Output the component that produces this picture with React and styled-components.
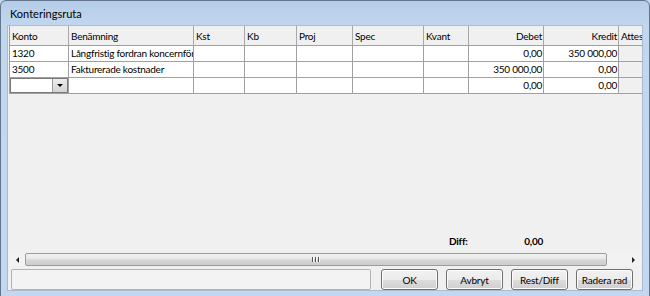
import React from "react";
import styled, { createGlobalStyle } from "styled-components";

const Global = createGlobalStyle`
  html, body { margin: 0; padding: 0; background: #c4d7ee; overflow: hidden; }
  body { font-family: Lato, "Liberation Sans", sans-serif; font-size: 10px; letter-spacing: -0.25px; color: #000; }
`;

const Window = styled.div`
  box-sizing: border-box;
  width: 650px;
  height: 300px;
  border: 1px solid #62758c;
  border-radius: 6px 6px 0 0;
  background: linear-gradient(#b5cde9 0px, #c2d6ee 24px, #c4d7ee 100%);
  display: flex;
  flex-direction: column;
  padding: 0 6px 0 6px;
`;

const TitleBar = styled.div`
  height: 24px;
  display: flex;
  align-items: center;
  padding: 1px 0 0 3px;
  box-sizing: border-box;
  font-size: 11px;
  letter-spacing: 0;
  color: #000;
`;

const Client = styled.div`
  box-sizing: border-box;
  width: 636px;
  height: 266px;
  background: #f0f0f0;
  border: 1px solid #a7bbd3;
  display: flex;
  flex-direction: column;
  overflow: hidden;
`;

const GridArea = styled.div`
  flex: 1;
  padding-left: 1px;
`;

const Row = styled.div`
  display: grid;
  grid-template-columns: ${(p) => p.$cols};
  height: ${(p) => (p.$header ? 19 : 15)}px;
  border-bottom: 1px solid #a0a0a0;
  width: max-content;
`;

const Cell = styled.div`
  box-sizing: border-box;
  border-right: 1px solid ${(p) => (p.$header ? "#a8a8a8" : "#a0a0a0")};
  &:first-child { border-left: 1px solid #a0a0a0; }
  background: ${(p) => (p.$header || p.$grey ? "#f0f0f0" : "#fff")};
  text-align: ${(p) => p.$align || "left"};
  padding: ${(p) => (p.$header ? "4px 1px 0 2px" : "1px 1px 0 2px")};
  line-height: 13px;
  white-space: nowrap;
  overflow: hidden;
  position: relative;
`;

const Combo = styled.div`
  position: absolute;
  left: 0;
  top: 0;
  right: 0;
  bottom: 0;
  border: 1px solid #7a7a7a;
  background: #fff;
  display: flex;
  justify-content: flex-end;
`;

const ComboButton = styled.div`
  width: 14px;
  border-left: 1px solid #9a9a9a;
  background: linear-gradient(#ececec, #d4d4d4);
  display: flex;
  align-items: center;
  justify-content: center;
  &::after {
    content: "";
    border-left: 3px solid transparent;
    border-right: 3px solid transparent;
    border-top: 3px solid #000;
  }
`;

const DiffRow = styled.div`
  display: flex;
  height: 15px;
  line-height: 15px;
  font-weight: bold;
  padding-left: 441px;
`;

const DiffLabel = styled.span`
  width: 20px;
`;

const DiffValue = styled.span`
  width: 75px;
  text-align: right;
  padding-right: 1px;
  box-sizing: border-box;
`;

const ScrollBar = styled.div`
  margin: 4px 1px 0 1px;
  height: 13px;
  display: flex;
  background: #f2f2f2;
`;

const Arrow = styled.div`
  width: 16px;
  display: flex;
  align-items: center;
  justify-content: center;
  &::after {
    content: "";
    border-top: 3px solid transparent;
    border-bottom: 3px solid transparent;
    ${(p) => (p.$dir === "left" ? "border-right: 3px solid #222;" : "border-left: 3px solid #222;")}
  }
`;

const Thumb = styled.div`
  width: 582px;
  box-sizing: border-box;
  border: 1px solid #9c9c9c;
  border-radius: 2px;
  background: linear-gradient(#f4f4f4 0%, #e6e6e6 45%, #d6d6d6 55%, #cdcdcd 100%);
  display: flex;
  align-items: center;
  justify-content: center;
  gap: 1px;
`;

const Grip = styled.span`
  width: 1px;
  height: 5px;
  background: #555;
  box-shadow: 1px 0 0 #fff;
  margin-right: 1px;
`;

const Track = styled.div`
  flex: 1;
`;

const BottomBar = styled.div`
  display: flex;
  align-items: center;
  margin-top: 3px;
  padding: 0 9px 0 3px;
  height: 21px;
`;

const StatusField = styled.div`
  box-sizing: border-box;
  width: 361px;
  height: 21px;
  border: 1px solid #b3b3b3;
  border-radius: 2px;
  background: #f3f3f3;
  margin-right: 10px;
`;

const Buttons = styled.div`
  display: flex;
  gap: 8px;
`;

const Button = styled.button`
  box-sizing: border-box;
  width: 57px;
  height: 21px;
  border: 1px solid #707070;
  border-radius: 3px;
  background: linear-gradient(#f2f2f2 0%, #ebebeb 50%, #dddddd 51%, #cfcfcf 100%);
  font-family: Lato, "Liberation Sans", sans-serif;
  font-size: 10px;
  letter-spacing: -0.2px;
  color: #000;
  padding: 0;
  box-shadow: inset 0 0 0 1px #fcfcfc;
`;

const columns = [
  { key: "konto", label: "Konto", width: 60 },
  { key: "ben", label: "Benämning", width: 125, tight: true },
  { key: "kst", label: "Kst", width: 51 },
  { key: "kb", label: "Kb", width: 52 },
  { key: "proj", label: "Proj", width: 56 },
  { key: "spec", label: "Spec", width: 71 },
  { key: "kvant", label: "Kvant", width: 45 },
  { key: "debet", label: "Debet", width: 75, align: "right" },
  { key: "kredit", label: "Kredit", width: 75, align: "right" },
  { key: "attes", label: "Attes", width: 30, grey: true },
];

const rows = [
  { konto: "1320", ben: "Långfristig fordran koncernför", debet: "0,00", kredit: "350 000,00" },
  { konto: "3500", ben: "Fakturerade kostnader", debet: "350 000,00", kredit: "0,00" },
  { combo: true, debet: "0,00", kredit: "0,00" },
];

const colTemplate = columns.map((c) => `${c.width}px`).join(" ");

export default function App() {
  return (
    <>
      <Global />
      <Window>
        <TitleBar>Konteringsruta</TitleBar>
        <Client>
          <GridArea>
            <Row $cols={colTemplate} $header>
              {columns.map((c) => (
                <Cell key={c.key} $header $align={c.align}>
                  {c.label}
                </Cell>
              ))}
            </Row>
            {rows.map((r, i) => (
              <Row key={i} $cols={colTemplate}>
                {columns.map((c) => (
                  <Cell key={c.key} $align={c.align} $grey={c.grey}>
                    {c.key === "konto" && r.combo ? (
                      <Combo>
                        <ComboButton />
                      </Combo>
                    ) : (
                      r[c.key] || ""
                    )}
                  </Cell>
                ))}
              </Row>
            ))}
          </GridArea>
          <DiffRow>
            <DiffLabel>Diff:</DiffLabel>
            <DiffValue>0,00</DiffValue>
          </DiffRow>
          <ScrollBar>
            <Arrow $dir="left" />
            <Thumb>
              <Grip />
              <Grip />
              <Grip />
            </Thumb>
            <Track />
            <Arrow $dir="right" />
          </ScrollBar>
          <BottomBar>
            <StatusField />
            <Buttons>
              <Button>OK</Button>
              <Button>Avbryt</Button>
              <Button>Rest/Diff</Button>
              <Button>Radera rad</Button>
            </Buttons>
          </BottomBar>
        </Client>
      </Window>
    </>
  );
}
